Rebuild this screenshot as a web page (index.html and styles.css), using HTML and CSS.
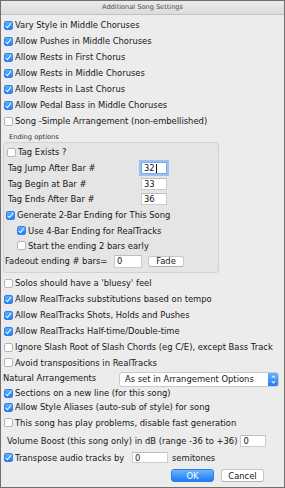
FILE: index.html
```html
<!DOCTYPE html>
<html lang="en">
<head>
    <meta charset="UTF-8">
    <title>Additional Song Settings</title>
    <link rel="stylesheet" href="styles.css">
</head>
<body>
<div class="dialog">
    <div class="titlebar">Additional Song Settings</div>
    <div class="content">
        <div class="row"><span class="cb on"></span>Vary Style in Middle Choruses</div>
        <div class="row"><span class="cb on"></span>Allow Pushes in Middle Choruses</div>
        <div class="row"><span class="cb on"></span>Allow Rests in First Chorus</div>
        <div class="row"><span class="cb on"></span>Allow Rests in Middle Choruses</div>
        <div class="row"><span class="cb on"></span>Allow Rests in Last Chorus</div>
        <div class="row"><span class="cb on"></span>Allow Pedal Bass in Middle Choruses</div>
        <div class="row"><span class="cb"></span>Song -Simple Arrangement (non-embellished)</div>

        <div class="grouplabel">Ending options</div>
        <div class="group">
            <div class="row"><span class="cb"></span>Tag Exists ?</div>
            <div class="row"><span class="taglabel">Tag Jump After Bar #</span><span class="field tagfield focused">32<span class="caret"></span></span></div>
            <div class="row h15"><span class="taglabel">Tag Begin at Bar #</span><span class="field tagfield">33</span></div>
            <div class="row h15"><span class="taglabel">Tag Ends After Bar #</span><span class="field tagfield">36</span></div>
            <div class="row gen"><span class="cb on"></span>Generate 2-Bar Ending for This Song</div>
            <div class="row h15 indent"><span class="cb on"></span>Use 4-Bar Ending for RealTracks</div>
            <div class="row h15 indent"><span class="cb"></span>Start the ending 2 bars early</div>
            <div class="row fade-row">
                <span class="fadelabel">Fadeout ending # bars=</span>
                <span class="field fadefield">0</span>
                <span class="btn small">Fade</span>
            </div>
        </div>

        <div class="row solos"><span class="cb"></span>Solos should have a 'bluesy' feel</div>
        <div class="row"><span class="cb on"></span>Allow RealTracks substitutions based on tempo</div>
        <div class="row"><span class="cb on"></span>Allow RealTracks Shots, Holds and Pushes</div>
        <div class="row"><span class="cb on"></span>Allow RealTracks Half-time/Double-time</div>
        <div class="row"><span class="cb"></span>Ignore Slash Root of Slash Chords (eg C/E), except Bass Track</div>
        <div class="row h15"><span class="cb"></span>Avoid transpositions in RealTracks</div>
        <div class="row natural">
            <span class="natlabel">Natural Arrangements</span>
            <span class="select">As set in Arrangement Options<span class="stepper"></span></span>
        </div>
        <div class="row h14"><span class="cb on"></span>Sections on a new line (for this song)</div>
        <div class="row h14"><span class="cb on"></span>Allow Style Aliases (auto-sub of style) for song</div>
        <div class="row h17"><span class="cb"></span>This song has play problems, disable fast generation</div>
        <div class="row h20 volume">
            <span>Volume Boost (this song only) in dB (range -36 to +36)</span>
            <span class="field volfield">0</span>
        </div>
        <div class="row h13">
            <span class="cb on"></span><span class="translabel">Transpose audio tracks by</span>
            <span class="field transfield">0</span>
            <span class="semis">semitones</span>
        </div>
        <div class="buttons">
            <span class="btn ok">OK</span>
            <span class="btn">Cancel</span>
        </div>
    </div>
</div>
</body>
</html>
```

FILE: styles.css
```css
* {
    box-sizing: border-box;
}
body {
    margin: 0;
    font-family: "DejaVu Sans", sans-serif;
}
.dialog {
    width: 285px;
    height: 488px;
    border: 1px solid #6f6f6f;
    background: #ececec;
    color: #161616;
    font-size: 8.4px;
    display: flex;
    flex-direction: column;
}
.titlebar {
    height: 14px;
    line-height: 13px;
    text-align: center;
    font-size: 6.6px;
    color: #4b4b4b;
    background: linear-gradient(#ebebeb, #dcdcdc);
    border-bottom: 1px solid #c2c2c2;
}
.content {
    padding: 2px 0 0 3px;
    display: flex;
    flex-direction: column;
}
.row {
    display: flex;
    align-items: center;
    height: 16px;
    white-space: nowrap;
}
.h13 { height: 13px; }
.h14 { height: 14px; }
.h15 { height: 15px; }
.h17 { height: 17px; }
.h20 { height: 20px; }

/* checkboxes */
.cb {
    position: relative;
    flex: none;
    width: 9px;
    height: 9px;
    margin-right: 2px;
    border: 1px solid #b4b4b4;
    border-radius: 2px;
    background: #fff;
}
.cb.on {
    border-color: #2f82ea;
    background: linear-gradient(#66aefb, #1f7ff6);
}
.cb.on::after {
    content: "";
    position: absolute;
    left: 2.4px;
    top: 0.4px;
    width: 2px;
    height: 4.5px;
    border-right: 1.3px solid #fff;
    border-bottom: 1.3px solid #fff;
    transform: rotate(40deg);
}

/* ending options */
.grouplabel {
    height: 13px;
    display: flex;
    align-items: flex-end;
    padding: 0 0 1px 5px;
    font-size: 6.7px;
    color: #333;
}
.group {
    width: 216px;
    margin-left: -1px;
    padding: 1px 0 3px 3px;
    border: 1px solid #d2d2d2;
    border-radius: 3px;
    background: #e5e5e5;
}
.taglabel {
    width: 134px;
    padding-left: 1px;
}
.gen {
    margin-top: 1px;
    margin-left: -1px;
}
.indent {
    margin-left: 10px;
}
.fadelabel {
    width: 109px;
    margin-left: -2px;
}
.field {
    display: flex;
    align-items: center;
    height: 12px;
    padding-left: 2px;
    background: #fff;
    border: 1px solid #cdcdcd;
    border-top-color: #bdbdbd;
}
.tagfield {
    width: 26px;
}
.focused {
    box-shadow: 0 0 0 2px #9dc0f0;
    border-color: #7aa7e6;
}
.caret {
    width: 1px;
    height: 9px;
    margin-left: 1px;
    background: #111;
}
.fadefield {
    width: 28px;
    height: 13px;
}
.btn {
    display: flex;
    align-items: center;
    justify-content: center;
    width: 43px;
    height: 13px;
    background: #fff;
    border: 1px solid #c6c6c6;
    border-bottom-color: #b0b0b0;
    border-radius: 3px;
}
.btn.small {
    width: 36px;
    height: 11px;
    margin-left: 6px;
}
.btn.ok {
    color: #fff;
    border-color: #2c7fe6;
    background: linear-gradient(#6db3fb, #1c7ef5);
}

/* lower part */
.solos {
    margin-top: 2px;
}
.natlabel {
    width: 116px;
    margin-left: -1px;
}
.select {
    position: relative;
    display: flex;
    align-items: center;
    width: 160px;
    height: 15px;
    margin-top: 2px;
    padding-left: 5px;
    background: #fff;
    border: 1px solid #c9c9c9;
    border-radius: 3px;
}
.stepper {
    position: absolute;
    right: 0;
    top: 0;
    width: 10px;
    height: 13px;
    border-radius: 0 2px 2px 0;
    background: linear-gradient(#6aaffa, #247ff4);
}
.stepper::before,
.stepper::after {
    content: "";
    position: absolute;
    left: 3.5px;
    width: 2px;
    height: 2px;
    border-left: 1px solid #fff;
    border-top: 1px solid #fff;
}
.stepper::before {
    top: 3px;
    transform: rotate(45deg);
}
.stepper::after {
    top: 7px;
    transform: rotate(225deg);
}
.volume {
    padding-left: 3px;
}
.volfield {
    width: 26px;
    margin-left: 3px;
}
.translabel {
    width: 117px;
}
.transfield {
    width: 36px;
    height: 11px;
}
.semis {
    margin-left: 4px;
}
.buttons {
    display: flex;
    justify-content: flex-end;
    gap: 7px;
    margin-top: 5px;
    padding-right: 20px;
}
```
